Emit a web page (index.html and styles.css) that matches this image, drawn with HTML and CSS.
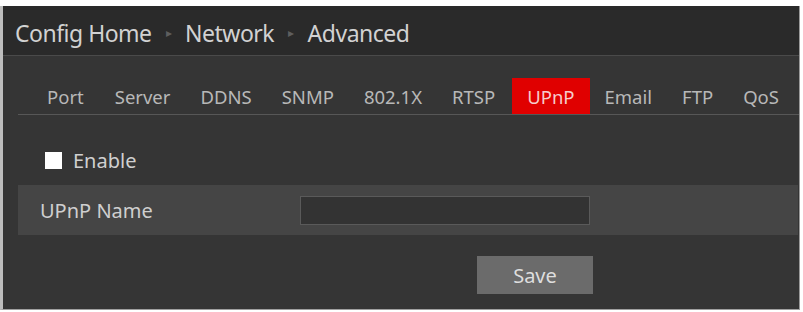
FILE: index.html
```html
<!DOCTYPE html>
<html lang="en">
<head>
    <meta charset="UTF-8">
    <title>UPnP</title>
    <link rel="stylesheet" href="styles.css">
</head>
<body>

    <div class="frame">
        <!-- Breadcrumb -->
        <header class="crumbs">
            <span>Config Home</span>
            <span class="arrow">&#9656;</span>
            <span>Network</span>
            <span class="arrow">&#9656;</span>
            <span>Advanced</span>
        </header>

        <div class="content">
            <!-- Tabs -->
            <ul class="tabs">
                <li>Port</li>
                <li>Server</li>
                <li>DDNS</li>
                <li>SNMP</li>
                <li>802.1X</li>
                <li>RTSP</li>
                <li class="active">UPnP</li>
                <li>Email</li>
                <li>FTP</li>
                <li>QoS</li>
            </ul>

            <label class="enable">
                <span class="check"></span>
                Enable
            </label>

            <div class="row">
                <span class="row-label">UPnP Name</span>
                <input class="text-input" type="text">
            </div>

            <div class="actions">
                <button class="save-button">Save</button>
            </div>
        </div>
    </div>

</body>
</html>
```

FILE: styles.css
```css
body {
    margin: 0;
    padding: 0;
    background-color: #ffffff;
    font-family: "Noto Sans", "Open Sans", sans-serif;
}
.frame {
    margin-top: 6px;
    width: 796px;
    height: 303px;
    background-color: #353535;
    border-left: 3px solid #bdbdbd;
    border-right: 1px solid #9a9a9a;
    border-bottom: 1px solid #a0a0a0;
}
.crumbs {
    height: 50px;
    box-sizing: border-box;
    padding: 4px 0 0 12px;
    display: flex;
    align-items: center;
    gap: 14px;
    background-color: #2a2a2a;
    border-bottom: 1px solid #4a4a4a;
    color: #d2d2d2;
    font-size: 23px;
    letter-spacing: -0.5px;
}
.crumbs .arrow {
    color: #5e5e5e;
    font-size: 12px;
}
.content {
    padding-left: 15px;
}
.tabs {
    list-style: none;
    margin: 22px 0 0 0;
    padding: 0 0 0 14px;
    height: 36px;
    display: flex;
    border-bottom: 1px solid #575757;
}
.tabs li {
    padding: 0 15px;
    display: flex;
    align-items: center;
    color: #b8b8b8;
    font-size: 18.5px;
}
.tabs li:first-child {
    margin-right: 1px;
}
.tabs li.active {
    background-color: #e00000;
    color: #f6cccc;
    margin-left: 2px;
}
.enable {
    display: flex;
    align-items: center;
    gap: 11px;
    height: 17px;
    margin: 37px 0 16px 27px;
    color: #d0d0d0;
    font-size: 20px;
}
.check {
    width: 17px;
    height: 17px;
    background-color: #ffffff;
}
.row {
    height: 50px;
    display: flex;
    align-items: center;
    background-color: #454545;
    margin-right: 1px;
}
.row-label {
    width: 282px;
    box-sizing: border-box;
    padding-left: 22px;
    color: #cfcfcf;
    font-size: 20px;
}
.text-input {
    width: 290px;
    height: 29px;
    box-sizing: border-box;
    margin: 0;
    background-color: #333333;
    border: 1px solid #5a5a5a;
}
.actions {
    padding: 21px 0 0 459px;
}
.save-button {
    width: 116px;
    height: 38px;
    border: none;
    background-color: #6b6b6b;
    color: #dedede;
    font-family: "Noto Sans", "Open Sans", sans-serif;
    font-size: 20px;
}
```
